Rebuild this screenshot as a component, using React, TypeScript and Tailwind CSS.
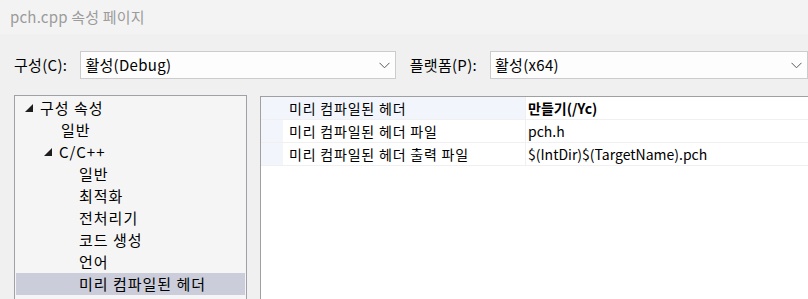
import React from 'react';

const font = { fontFamily: '"Noto Sans CJK KR", "Noto Sans", sans-serif' };

function Chevron() {
  return (
    <svg width="11" height="7" viewBox="0 0 11 7" className="shrink-0">
      <path d="M0.5 0.8 L5.5 5.8 L10.5 0.8" fill="none" stroke="#5a5a5a" strokeWidth="1" />
    </svg>
  );
}

function Expanded() {
  return (
    <svg width="8" height="8" viewBox="0 0 8 8" className="shrink-0">
      <polygon points="8,0 8,8 0,8" fill="#1e1e1e" />
    </svg>
  );
}

function Combo({ value, className }: { value: string; className: string }) {
  return (
    <div
      className={`flex h-[28px] items-center justify-between border border-[#cccccc] bg-[#fdfdfd] pl-[4px] pr-[5px] text-[15px] tracking-[0.3px] text-black ${className}`}
    >
      <span>{value}</span>
      <Chevron />
    </div>
  );
}

type TreeItem = { label: string; pad: number; expanded?: boolean; selected?: boolean };

const tree: TreeItem[] = [
  { label: '구성 속성', pad: 9, expanded: true },
  { label: '일반', pad: 45 },
  { label: 'C/C++', pad: 28, expanded: true },
  { label: '일반', pad: 63 },
  { label: '최적화', pad: 63 },
  { label: '전처리기', pad: 63 },
  { label: '코드 생성', pad: 63 },
  { label: '언어', pad: 63 },
  { label: '미리 컴파일된 헤더', pad: 63, selected: true },
];

const props = [
  { name: '미리 컴파일된 헤더', value: '만들기(/Yc)', bold: true, selected: true },
  { name: '미리 컴파일된 헤더 파일', value: 'pch.h' },
  { name: '미리 컴파일된 헤더 출력 파일', value: '$(IntDir)$(TargetName).pch' },
];

export default function App() {
  return (
    <div className="relative h-[299px] w-[808px] overflow-hidden bg-[#f0f0f0]" style={font}>
      {/* Title bar */}
      <div className="flex h-[34px] items-center bg-[#f3f3f3] pl-[10px] text-[15px] tracking-[0.2px] text-[#9b9b9b]">
        pch.cpp 속성 페이지
      </div>

      {/* Configuration row */}
      <div className="mt-[17px] flex items-center whitespace-nowrap text-[15px] text-black">
        <span className="w-[81px] pl-[14px] tracking-[0.3px]">구성(C):</span>
        <Combo value="활성(Debug)" className="w-[318px]" />
        <span className="w-[95px] pl-[14px] tracking-[0.3px]">플랫폼(P):</span>
        <Combo value="활성(x64)" className="w-[318px] shrink-0" />
      </div>

      {/* Panels */}
      <div className="mt-[16px] flex items-start">
        <div className="ml-[14px] h-[220px] w-[233px] shrink-0 border border-[#a0a0a8] bg-[#f5f5f5] px-px pt-px">
          {tree.map((t, i) => (
            <div
              key={i}
              className={`flex h-[22px] items-center text-[15px] tracking-[1px] text-black ${t.selected ? 'bg-[#cbcdda]' : ''}`}
              style={{ paddingLeft: t.pad }}
            >
              {t.expanded && <Expanded />}
              <span className={t.expanded ? 'ml-[7px]' : ''}>{t.label}</span>
            </div>
          ))}
        </div>

        <div className="ml-[13px] mt-px h-[220px] w-[560px] shrink-0 border border-[#a0a0a0] bg-white">
          {props.map((p, i) => (
            <div key={i} className="flex h-[23px] border-b border-[#f0f0f0] text-[14px] text-black">
              <div className="w-[22px] shrink-0 bg-[#f2f6fc]" />
              <div
                className={`flex w-[243px] shrink-0 items-center border-r border-[#f0f0f0] pl-[6px] tracking-[0.8px] ${p.selected ? 'bg-[#f2f6fc]' : ''}`}
              >
                {p.name}
              </div>
              <div className={`flex items-center pl-[2px] ${p.bold ? 'font-bold' : ''}`}>{p.value}</div>
            </div>
          ))}
        </div>
      </div>
    </div>
  );
}
